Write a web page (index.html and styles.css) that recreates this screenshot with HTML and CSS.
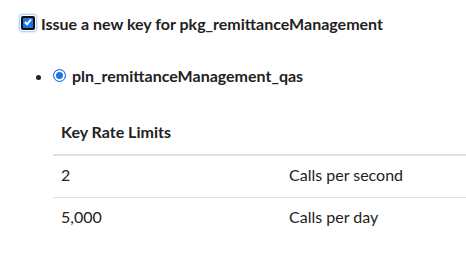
FILE: index.html
```html
<!DOCTYPE html>
<html lang="en">
<head>
  <meta charset="UTF-8">
  <title>Issue key</title>
  <link rel="stylesheet" href="styles.css">
</head>
<body>
  <div class="issue">
    <label class="issue-label">
      <span class="check"></span>
      Issue a new key for pkg_remittanceManagement
    </label>
    <ul class="plans">
      <li>
        <label class="plan-label">
          <span class="radio"></span>
          pln_remittanceManagement_qas
        </label>
        <table class="limits">
          <thead>
            <tr><th colspan="2">Key Rate Limits</th></tr>
          </thead>
          <tbody>
            <tr><td class="value">2</td><td>Calls per second</td></tr>
            <tr><td class="value">5,000</td><td>Calls per day</td></tr>
          </tbody>
        </table>
      </li>
    </ul>
  </div>
</body>
</html>
```

FILE: styles.css
```css
body {
  margin: 0;
  font-family: Lato, "Noto Sans", sans-serif;
  font-size: 16px;
  color: #222;
  background: #fff;
}
.issue {
  padding: 15px 0 0 21px;
}
.issue-label {
  display: flex;
  align-items: center;
  gap: 6px;
  font-weight: bold;
  height: 16px;
}
.check {
  width: 10px;
  height: 10px;
  border: 2px solid #111;
  border-radius: 2px;
  background: #1a73e8;
  box-shadow: 0 0 0 1px #fff, 0 0 2px 2px #9cc5ef;
  position: relative;
}
.check::after {
  content: "";
  position: absolute;
  left: 3px;
  top: 0px;
  width: 2px;
  height: 5px;
  border: solid #fff;
  border-width: 0 2px 2px 0;
  transform: rotate(40deg);
}
.plans {
  margin: 0;
  padding: 0 0 0 32px;
  list-style: disc;
}
.plans li {
  margin-top: 35px;
}
.plan-label {
  display: inline-flex;
  align-items: center;
  gap: 6px;
  font-weight: bold;
  vertical-align: top;
}
.radio {
  width: 11px;
  height: 11px;
  border: 1.5px solid #1a73e8;
  border-radius: 50%;
  background: #1a73e8;
  box-shadow: inset 0 0 0 2px #fff;
}
.limits {
  width: calc(100% + 21px);
  border-collapse: collapse;
  margin-top: 25px;
}
.limits th {
  text-align: left;
  padding: 12px 8px 13px;
  border-bottom: 2px solid #e0e0e0;
}
.limits td {
  padding: 9px 8px 13px;
  border-bottom: 1px solid #e0e0e0;
}
.limits .value {
  width: 212px;
}
.limits tr:last-child td {
  border-bottom: none;
}
```
